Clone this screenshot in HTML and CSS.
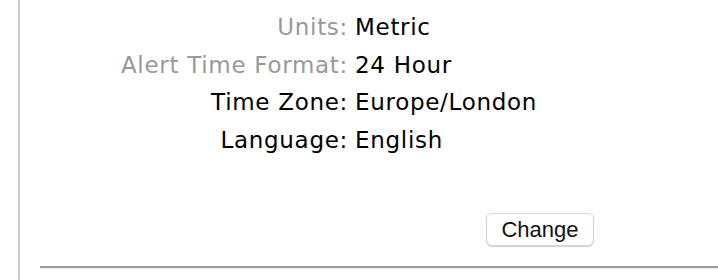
FILE: index.html
```html
<!DOCTYPE html>
<html lang="en">
<head>
    <meta charset="UTF-8">
    <meta name="viewport" content="width=device-width, initial-scale=1.0">
    <title>Account Settings</title>
    <link rel="stylesheet" href="styles.css">
</head>
<body>
    <section class="settings-panel">
        <dl class="settings">
            <dt class="setting-label muted">Units:</dt>
            <dd class="setting-value">Metric</dd>

            <dt class="setting-label muted">Alert Time Format:</dt>
            <dd class="setting-value">24 Hour</dd>

            <dt class="setting-label">Time Zone:</dt>
            <dd class="setting-value">Europe/London</dd>

            <dt class="setting-label">Language:</dt>
            <dd class="setting-value">English</dd>
        </dl>

        <div class="actions">
            <button type="button" class="change-btn">Change</button>
        </div>

        <hr class="divider">
    </section>
</body>
</html>
```

FILE: styles.css
```css
* {
    margin: 0;
    padding: 0;
    box-sizing: border-box;
}

body {
    font-family: "DejaVu Sans", Verdana, sans-serif;
    background: #fff;
    color: #000;
    overflow: hidden;
}

.settings-panel {
    margin-left: 18px;
    border-left: 2px solid #cccccc;
    height: 280px;
    padding-top: 9px;
}

.settings {
    display: grid;
    grid-template-columns: 328px auto;
    column-gap: 7px;
    font-size: 23px;
    letter-spacing: 0.7px;
    line-height: 37.6px;
}

.setting-label {
    text-align: right;
}

.setting-label.muted {
    color: #999999;
}

.actions {
    display: flex;
    padding: 54px 0 0 466px;
}

.change-btn {
    font-family: "Liberation Sans", Arial, sans-serif;
    font-size: 22px;
    color: #111;
    background: #fff;
    border: 1px solid #d4d4d4;
    border-radius: 6px;
    box-shadow: 0 1px 1px rgba(0, 0, 0, 0.18);
    width: 108px;
    height: 33px;
    line-height: 31px;
    cursor: pointer;
}

.divider {
    margin: 20px 0 0 20px;
    border: none;
    border-top: 2px solid #9b9b9b;
    border-bottom: 1px solid #eeeeee;
}
```
